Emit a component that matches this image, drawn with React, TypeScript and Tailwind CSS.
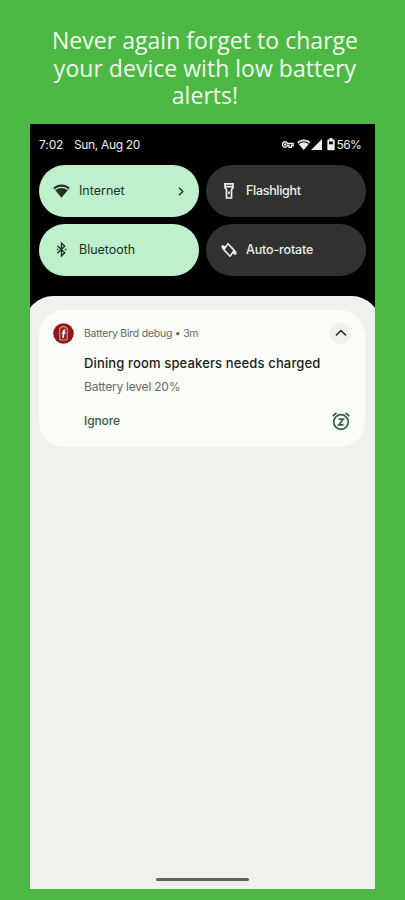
import type { ReactNode } from "react";

function Wifi({ className, gap }: { className: string; gap: string }) {
  return (
    <svg viewBox="0 0 34 28" className={className}>
      <path d="M17 27.5 0.5 7.5C5 3 11 .8 17 .8S29 3 33.5 7.5Z" fill="currentColor" />
      <path d="M4.4 11.2C8 8 12.3 6.6 17 6.6s9 1.4 12.6 4.6" fill="none" stroke={gap} strokeWidth="2.6" />
    </svg>
  );
}

function Tile({ icon, label, on, trailing }: { icon: ReactNode; label: ReactNode; on?: boolean; trailing?: ReactNode }) {
  return (
    <div
      className={
        "flex h-[52px] items-center rounded-[26px] pl-[13px] pr-[15px] text-[12.5px] " +
        (on ? "bg-[#bdf0cb] text-[#203028]" : "bg-[#30322f] font-medium text-[#ecefea]")
      }
    >
      <span className="flex w-[19px] justify-center">{icon}</span>
      <span className="ml-2 grow pt-px whitespace-nowrap">{label}</span>
      {trailing}
    </div>
  );
}

export default function App() {
  return (
    <div className="flex h-[900px] w-[405px] flex-col overflow-hidden bg-[#4db944] font-['Inter','Liberation_Sans',sans-serif]">
      <h1 className="h-[124px] shrink-0 pt-[27px] pr-[40px] pl-[45px] text-center font-['Open_Sans',sans-serif] text-[23px] leading-[27.7px] tracking-[0.03px] text-[#f0faee]">
        Never again forget to charge your device with low battery alerts!
      </h1>

      <main className="ml-[30px] flex h-[765px] w-[345px] shrink-0 flex-col overflow-hidden bg-black">
        <header className="flex h-[41px] shrink-0 items-center pl-[9px] pr-[14px] text-[12px] text-[#eeeeee]">
          <span className="w-[35px] tracking-[-0.1px]">7:02</span>
          <span className="tracking-[-0.35px] whitespace-nowrap">Sun, Aug 20</span>
          <div className="ml-auto flex items-center">
            <svg viewBox="0 0 24 14" className="h-[7px] w-[12px]" fill="none" stroke="currentColor" strokeWidth="2.6">
              <path d="M11 5C10 2.5 8.4 1.5 6.5 1.5a5.5 5.5 0 0 0 0 11C8.4 12.5 10 11.5 11 9h3v3.5h5V9h3.5V5Z" />
              <circle cx="6.5" cy="7" r="1.3" />
            </svg>
            <Wifi className="ml-[3px] h-[11.5px] w-[13.5px]" gap="#000000" />
            <svg viewBox="0 0 11 11" className="ml-[0.5px] h-[11px] w-[11px]">
              <path d="M11 0v11H0Z" fill="currentColor" />
            </svg>
            <svg viewBox="0 0 8 13" className="ml-[5px] h-[12.5px] w-[8px]">
              <path d="M2.5 0h3v1.5H7a.8.8 0 0 1 .8.8v9.7a.8.8 0 0 1-.8.8H1a.8.8 0 0 1-.8-.8V2.3a.8.8 0 0 1 .8-.8h1.500Z" fill="currentColor" />
              <path d="M2 3.500h4v3H2Z" fill="#000000" />
            </svg>
            <span className="ml-[2px] text-[12px] tracking-[-0.7px]">56%</span>
          </div>
        </header>

        <section className="ml-[9px] grid h-[130.5px] w-[327px] shrink-0 grid-cols-[160px_160px] content-start gap-x-[7px] gap-y-[6.5px]">
          <Tile
            on
            icon={<Wifi className="h-[14px] w-[17px]" gap="#bdf0cb" />}
            label={<span>Internet</span>}
            trailing={
              <svg viewBox="0 0 6 9" className="h-[9px] w-[6px]" fill="none" stroke="currentColor" strokeWidth="1.4">
                <path d="m1 .7 3.800 3.800L1 8.300" />
              </svg>
            }
          />
          <Tile
            label={<span className="tracking-[-0.3px]">Flashlight</span>}
            icon={
              <svg viewBox="0 0 10 16" className="h-[16px] w-[10px]" fill="none" stroke="currentColor" strokeWidth="1.7">
                <path d="M1 .9h8v3.600L7.500 7v8h-5V7L1 4.500ZM1 3.600h8" />
                <path d="M5 8.500v2.500" />
              </svg>
            }
          />
          <Tile
            on
            label={<span className="tracking-[-0.02px]">Bluetooth</span>}
            icon={
              <svg viewBox="0 0 12 16" className="h-[15px] w-[11px]" fill="none" stroke="currentColor" strokeWidth="1.5">
                <path d="m1.500 4 8 7.600L6 15V1l3.500 3.400-8 7.600" />
                <path d="M1 8h1.600M9.700 8h1.600" strokeWidth="1.800" />
              </svg>
            }
          />
          <Tile
            label={<span className="tracking-[-0.15px]">Auto-rotate</span>}
            icon={
              <svg viewBox="0 0 16 16" className="h-[16px] w-[16px]" fill="none" stroke="currentColor" strokeWidth="1.6" strokeLinejoin="round">
                <path d="M7 1.800 13.200 8.400 9 14.200 2.800 7.600Z" />
                <path d="M1 3.400 4.400 4.600 3.600 7.400 1 6.600ZM15 12.600 11.600 11.400 12.400 8.600 15 9.400Z" fill="currentColor" strokeWidth=".8" />
              </svg>
            }
          />
        </section>

        <section className="mx-[-5px] flex grow flex-col items-center rounded-t-[28px] bg-[#eef1ec] pt-[14px]">
          <article className="mr-px flex h-[137.5px] w-[326px] shrink-0 rounded-[25px] bg-[#f9fcf7] px-[14px]">
            <div className="w-[31px] pt-[13px]">
              <svg viewBox="0 0 21 21" className="h-[21px] w-[21px]">
                <circle cx="10.5" cy="10.5" r="10.3" fill="#8e1a19" />
                <path d="M8.800 3.600h3.400v1.300h2v12H6.800v-12h2Z" fill="none" stroke="#d9a9a3" strokeWidth="1" />
                <path d="M12.500 6.700c-2-.4-2.900.5-2.900 2L8.500 10.800h1.200l-.5 4h1.800l.4-4h1V9.300h-.9Z" fill="#ffffff" />
              </svg>
            </div>
            <div className="flex grow flex-col">
              <div className="mt-[13px] flex h-[21px] items-center text-[10.5px] whitespace-nowrap text-[#666966]">
                <span className="grow pt-px tracking-[-0.25px]">Battery Bird debug • 3m</span>
                <span className="flex size-[21px] items-center justify-center rounded-full bg-[#eef1ec]">
                  <svg viewBox="0 0 12 8" className="h-[8px] w-[12px]" fill="none" stroke="#20231f" strokeWidth="1.5">
                    <path d="m1 6.500 5-5 5 5" />
                  </svg>
                </span>
              </div>
              <h2 className="mt-[10px] text-[13px] leading-[18px] font-medium tracking-[0.14px] whitespace-nowrap text-[#1b1e1b]">
                Dining room speakers needs charged
              </h2>
              <p className="mt-[7px] text-[12px] leading-[16px] tracking-[-0.22px] text-[#686b67]">Battery level 20%</p>
              <div className="mt-[16px] flex h-[21px] items-center justify-between text-[12px] font-medium text-[#346047]">
                <span className="tracking-[-0.1px]">Ignore</span>
                <svg viewBox="0 0 20 20" className="h-[20px] w-[20px]" fill="none" stroke="currentColor" strokeWidth="1.7">
                  <circle cx="10" cy="11" r="7.300" />
                  <path d="M1.700 5 5.500 1.800M18.300 5l-3.800-3.200" />
                  <path d="M7.500 8.200h4.700l-4.400 5.600h4.700" />
                </svg>
              </div>
            </div>
          </article>
          <div className="mt-auto mb-[8.5px] h-[3px] w-[93px] rounded-full bg-[#60625f]" />
        </section>
      </main>
    </div>
  );
}
